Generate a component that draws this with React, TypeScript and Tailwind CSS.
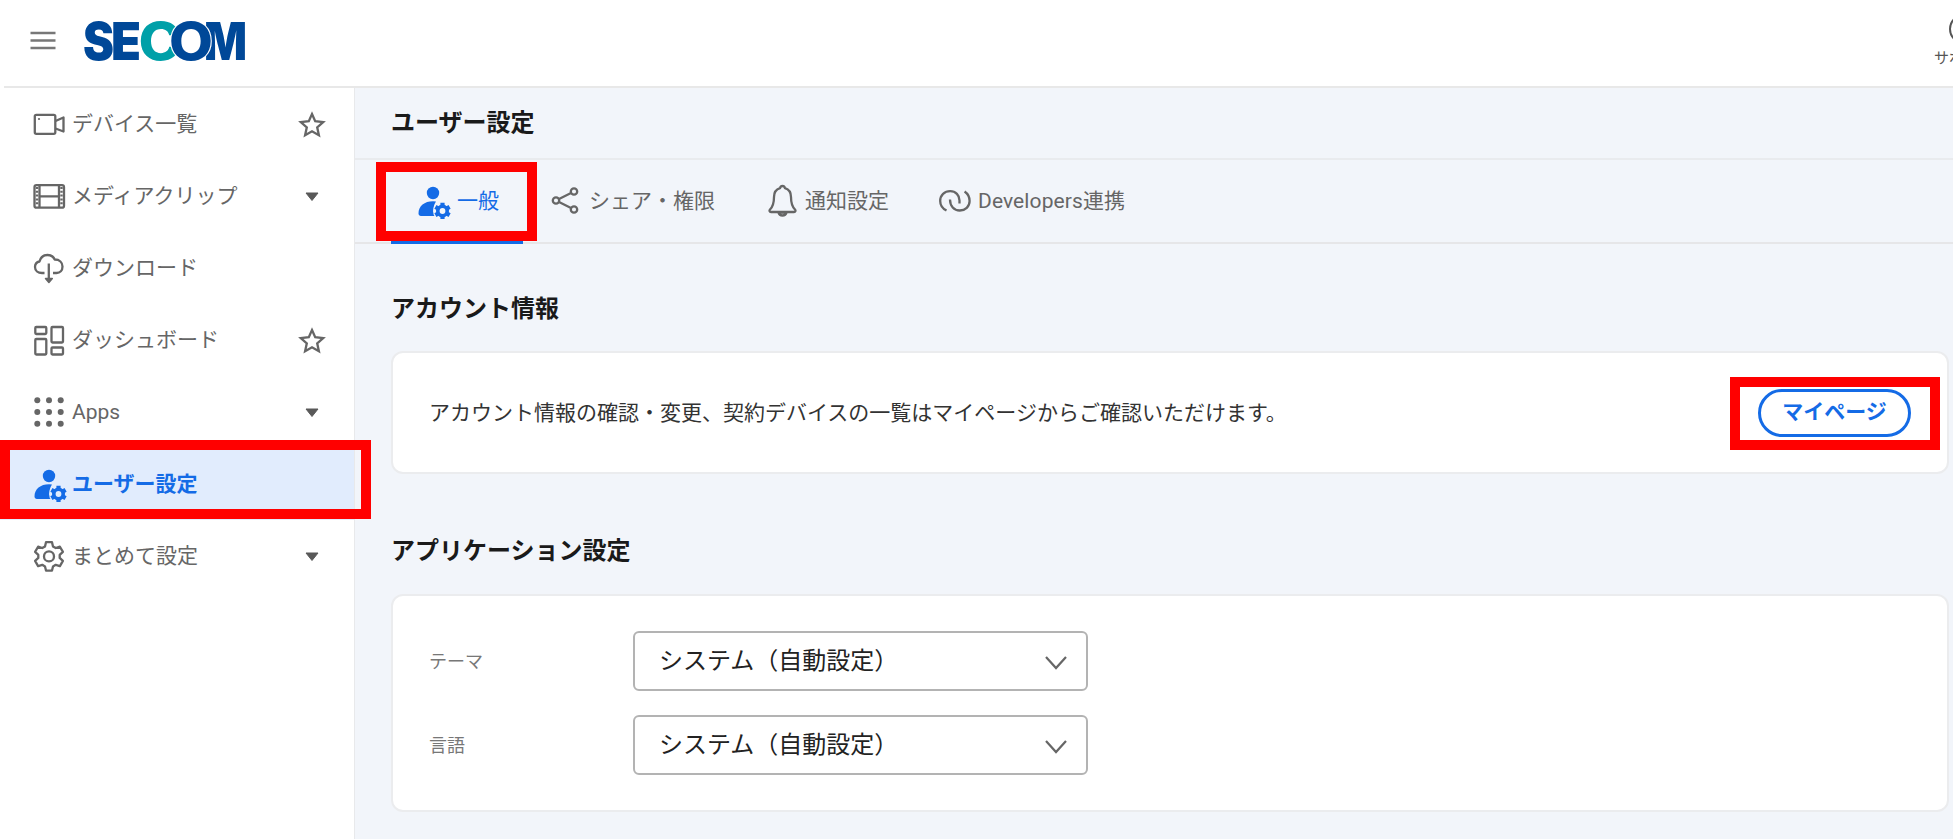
import type { ReactNode } from 'react'

const ink = '#666666'
const blue = '#146be6'

function SecomLogo() {
  return (
    <svg
      width="170"
      height="48"
      viewBox="80 17 170 48"
      className="ml-6 shrink-0 overflow-visible"
      fontFamily="Inter, sans-serif"
      fontWeight="900"
      fontSize="52"
    >
      <text x="83" y="60" fill="#004898" textLength="31" lengthAdjust="spacingAndGlyphs">S</text>
      <text x="111" y="60" fill="#004898" textLength="30" lengthAdjust="spacingAndGlyphs">E</text>
      <text x="138.500" y="60" fill="#00a0a8" fontWeight="800" textLength="43" lengthAdjust="spacingAndGlyphs">C</text>
      <text x="204" y="60" fill="#004898" textLength="43" lengthAdjust="spacingAndGlyphs">M</text>
      <text x="169" y="60" fill="#004898" stroke="#fff" strokeWidth="2" paintOrder="stroke" fontWeight="800" textLength="44" lengthAdjust="spacingAndGlyphs">O</text>
    </svg>
  )
}

interface IconProps {
  children: ReactNode
  color?: string
}

function Icon({ children, color = ink }: IconProps) {
  return (
    <svg width="36" height="36" viewBox="0 0 36 36" fill="none" stroke={color} strokeWidth="2.3" strokeLinejoin="round" className="shrink-0">
      {children}
    </svg>
  )
}

function CameraIcon() {
  return (
    <Icon>
      <rect x="3.8" y="8.8" width="20.5" height="19" rx="1.5" />
      <path d="M24.500 15l8-3.500v14L24.500 22.500" />
      <circle cx="8" cy="13" r="1.100" fill={ink} stroke="none" />
    </Icon>
  )
}

function FilmIcon() {
  return (
    <Icon>
      <rect x="3.500" y="7.200" width="29.500" height="22.500" rx="2" />
      <path d="M8.500 7v22.500M28 7v22.500M8.500 18.300h20" />
      <path d="M6 9v19M30.500 9v19" strokeDasharray="2 1.800" strokeWidth="2.400" />
    </Icon>
  )
}

function CloudIcon() {
  return (
    <Icon>
      <path d="M13.500 23H11C7 23 4 20.500 4 17C4 14 6 12 8.500 11.500C9.500 7.500 12.500 5 16.500 5C20 5 22.500 6.800 23.700 9.500C28.500 9.500 31.500 12.500 31.500 16.500C31.500 20.500 29 23 25.500 23H22" />
      <path d="M17.800 13.500V31" />
      <path d="M14.500 28.500h6.800l-3.400 4z" fill={ink} strokeWidth="1.500" />
    </Icon>
  )
}

function DashboardIcon() {
  return (
    <Icon>
      <rect x="4.300" y="5" width="11" height="7" rx="1" />
      <rect x="20.500" y="5" width="11.500" height="15.500" rx="1" />
      <rect x="4.300" y="17" width="11" height="15.500" rx="1" />
      <rect x="20.500" y="25.500" width="11.500" height="7" rx="1" />
    </Icon>
  )
}

function AppsIcon() {
  return (
    <Icon>
      {[6.3, 18, 29.7].map((y) =>
        [6.3, 18, 29.7].map((x) => <circle key={`${x}-${y}`} cx={x} cy={y} r="3" fill={ink} stroke="none" />)
      )}
    </Icon>
  )
}

const gearPath =
  'M15 4.200h6l1 4.200 2.700 1.600 4.200-1.300 3 5.200-3.200 3v3l3.200 3-3 5.200-4.200-1.300-2.700 1.600-1 4.200h-6l-1-4.200-2.700-1.600-4.200 1.300-3-5.200 3.200-3v-3l-3.200-3 3-5.200 4.200 1.300 2.700-1.600z'

function GearIcon() {
  return (
    <Icon>
      <path d={gearPath} />
      <circle cx="18" cy="18.400" r="5" />
    </Icon>
  )
}

function UserGearIcon() {
  return (
    <Icon color={blue}>
      <g fill={blue} stroke="none">
        <circle cx="18" cy="10" r="6.200" />
        <path d="M18 18.300C9.500 18.300 3.500 23 3.500 30.500c0 1.500 1 2.500 2.500 2.500H21C18 29.500 17.500 23.500 21 18.500z" />
      </g>
      <circle cx="27.500" cy="28" r="9.500" fill="currentColor" stroke="none" />
      <circle cx="27.500" cy="28" r="4.700" strokeWidth="3.600" />
      <path d="M27.500 19.800v3M27.500 33.200v3M20.400 23.900l2.600 1.500M32 30.600l2.600 1.500M20.400 32.100l2.600-1.500M32 25.400l2.600-1.500" strokeWidth="4.200" />
    </Icon>
  )
}

function ShareIcon() {
  return (
    <Icon>
      <circle cx="8" cy="17.500" r="3.200" />
      <circle cx="26" cy="8.500" r="3.200" />
      <circle cx="26" cy="26.500" r="3.200" />
      <path d="M11 16l12-6M11 19l12 6" />
    </Icon>
  )
}

function BellIcon() {
  return (
    <Icon>
      <path d="M18.500 3c-1.500 0-2.200 1-2.500 2.200C12 6.500 10 10 10 14c0 7-1.500 10-4 12.500-1 1-.5 2.500 1 2.500h23c1.500 0 2-1.500 1-2.500-2.500-2.500-4-5.500-4-12.500 0-4-2-7.500-6-8.800C20.700 4 20 3 18.500 3z" />
      <path d="M14.500 29.500c1 4 7 4 8 0z" />
    </Icon>
  )
}

function LinkIcon() {
  return (
    <Icon>
      <path d="M10.500 27.500C6.500 25.500 4.200 22.300 4.200 18C4.200 12 8.500 8.200 14.200 8.200c5.500 0 9.300 4 9.300 9.300v3" />
      <path d="M14 16.500c0 6.500 4 11 9.800 11 5.500 0 9.800-4 9.800-9.500 0-4-1.800-7.300-5-9.500" />
    </Icon>
  )
}

function Star() {
  return (
    <svg width="28" height="28" viewBox="0 0 28 28" fill="none" stroke={ink} strokeWidth="2.300" strokeLinejoin="miter">
      <path d="M14 4l3.200 7.100 8 .9-6 5.300 1.700 8-6.900-4-6.900 4 1.700-8-6-5.300 8-.9z" />
    </svg>
  )
}

function Caret() {
  return (
    <svg width="28" height="28" viewBox="0 0 28 28" fill="#595959" stroke="#595959" strokeLinejoin="round">
      <path d="M8 11h12L14 18.500z" />
    </svg>
  )
}

interface NavItem {
  label: string
  icon: ReactNode
  extra?: 'star' | 'caret'
  active?: boolean
}

const navItems: NavItem[] = [
  { label: 'デバイス一覧', icon: <CameraIcon />, extra: 'star' },
  { label: 'メディアクリップ', icon: <FilmIcon />, extra: 'caret' },
  { label: 'ダウンロード', icon: <CloudIcon /> },
  { label: 'ダッシュボード', icon: <DashboardIcon />, extra: 'star' },
  { label: 'Apps', icon: <AppsIcon />, extra: 'caret' },
  { label: 'ユーザー設定', icon: <UserGearIcon />, active: true },
  { label: 'まとめて設定', icon: <GearIcon />, extra: 'caret' },
]

function Sidebar() {
  return (
    <nav className="w-[356px] shrink-0 border-r-2 border-[#e8e9eb] bg-white">
      {navItems.map((item) => (
        <div
          key={item.label}
          className={`flex h-[72px] items-center pl-[31px] pr-[28px] ${
            item.active ? 'bg-[#e1ecfd] font-bold text-[#146be6]' : 'text-[#666666]'
          }`}
        >
          <span className={`flex w-[41px] ${item.active ? 'text-[#e1ecfd]' : ''}`}>{item.icon}</span>
          <span className="flex-1 pt-0.5 whitespace-nowrap">{item.label}</span>
          {item.extra === 'star' && <Star />}
          {item.extra === 'caret' && <Caret />}
        </div>
      ))}
    </nav>
  )
}

function SelectRow({ label }: { label: string }) {
  return (
    <div className="flex items-center">
      <span className="w-[204px] pt-0.5 text-lg text-[#777777]">{label}</span>
      <button className="flex h-[60px] w-[455px] items-center justify-between rounded-md border-2 border-[#b3b3b3] bg-white pl-6 pr-[18px] text-2xl text-[#222222]">
        <span>システム（自動設定）</span>
        <svg width="24" height="24" viewBox="0 0 24 24" fill="none" stroke={ink} strokeWidth="2.200">
          <path d="M2 8l10 11L22 8" />
        </svg>
      </button>
    </div>
  )
}

// Red frame that marks a spot to click
function Highlight({ className }: { className: string }) {
  return <div className={`pointer-events-none absolute border-[10px] border-[#ff0000] ${className}`} />
}

export default function App() {
  return (
    <div className="relative flex h-[839px] w-[1953px] flex-col overflow-hidden bg-white font-[Roboto,'Noto_Sans_CJK_JP',sans-serif] text-[21px]">
      <header className="ml-1 flex h-[88px] shrink-0 items-center border-b-2 border-[#e8e8e8] pb-1">
        <svg width="26" height="20" viewBox="0 0 26 20" className="ml-[26px] shrink-0" stroke="#777" strokeWidth="2.600">
          <path d="M0.500 2h25M0.500 9.500h25M0.500 17h25" />
        </svg>
        <SecomLogo />
        <div className="ml-auto -mr-[41px] flex w-[60px] shrink-0 flex-col items-center text-[15px] leading-5 text-[#555555]">
          <svg width="30" height="30" viewBox="0 0 30 30" className="shrink-0" fill="none" stroke="#555" strokeWidth="2">
            <circle cx="15" cy="15" r="14" />
          </svg>
          <span className="mt-1 whitespace-nowrap">サポート</span>
        </div>
      </header>

      <div className="flex min-h-0 flex-1">
        <Sidebar />

        <main className="-ml-px min-w-0 flex-1 bg-[#f2f5fa]">
          <div className="flex h-[72px] items-center border-b-2 border-[#e9ebee] pl-9">
            <h1 className="text-2xl font-bold text-[#1a1a1a]">ユーザー設定</h1>
          </div>

          <div className="flex h-[84px] border-b-2 border-[#e6e6e8] pl-9 text-[#666666]">
            <div className="-mb-0.5 flex w-[132px] items-center justify-center border-b-[3px] border-[#146be6] text-[#146be6]">
              <span className="flex w-[42px] text-[#f2f5fa]"><UserGearIcon /></span>
              <span className="pt-0.5">一般</span>
            </div>
            <div className="ml-[25px] flex w-[216px] items-center">
              <span className="flex w-[41px]"><ShareIcon /></span>
              <span className="pt-0.5">シェア・権限</span>
            </div>
            <div className="flex w-[172px] items-center">
              <span className="flex w-[41px]"><BellIcon /></span>
              <span className="pt-0.5">通知設定</span>
            </div>
            <div className="flex items-center">
              <span className="flex w-[42px]"><LinkIcon /></span>
              <span className="pt-0.5 tracking-[0.1px]">Developers連携</span>
            </div>
          </div>

          <div className="flex flex-col pl-9 pr-1">
            <h2 className="mt-[47px] h-[36px] text-2xl leading-9 font-bold text-[#1a1a1a]">アカウント情報</h2>
            <section className="mt-[24px] flex h-[123px] items-center rounded-xl border-2 border-[#ebecee] bg-white pl-9 pr-[36px]">
              <p className="flex-1 pt-0.5 text-[#333333]">アカウント情報の確認・変更、契約デバイスの一覧はマイページからご確認いただけます。</p>
              <button className="h-12 w-[153px] rounded-full border-[3px] border-[#146be6] bg-white pt-px font-bold text-[#146be6]">
                マイページ
              </button>
            </section>

            <h2 className="mt-[59px] h-[36px] text-2xl leading-9 font-bold text-[#1a1a1a]">アプリケーション設定</h2>
            <section className="mt-[25px] flex h-[218px] flex-col gap-6 rounded-xl border-2 border-[#ebecee] bg-white pl-9 pt-[35px]">
              <SelectRow label="テーマ" />
              <SelectRow label="言語" />
            </section>
          </div>
        </main>
      </div>

      <Highlight className="left-0 top-[440px] h-[79px] w-[371px]" />
      <Highlight className="left-[376px] top-[162px] h-[79px] w-[161px]" />
      <Highlight className="left-[1730px] top-[377px] h-[73px] w-[210px]" />
    </div>
  )
}
